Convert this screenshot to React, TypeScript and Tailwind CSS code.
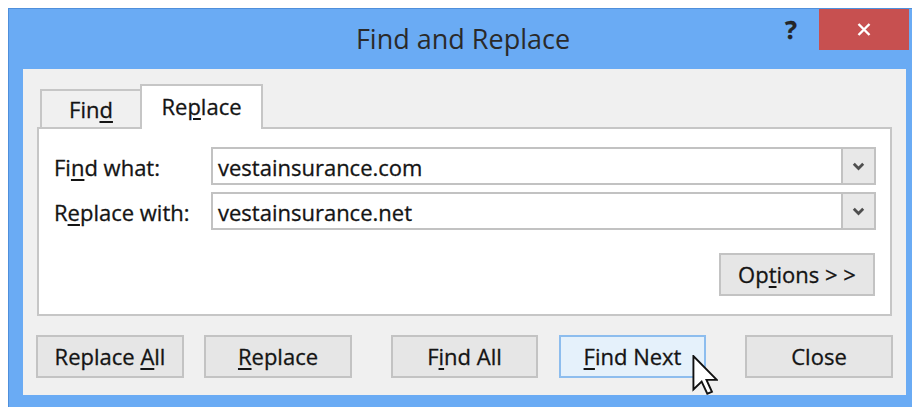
import type { ReactNode } from 'react'

// mnemonic letter, drawn underlined like a Win32 accelerator
function Key({ children }: { children: ReactNode }) {
  return <span className="underline decoration-[1.5px] underline-offset-[3px]">{children}</span>
}

function Chevron() {
  return (
    <svg width="13" height="9" viewBox="0 0 13 9">
      <path d="M1.8 1.8 L6.5 6.5 L11.2 1.8" fill="none" stroke="#4f4f4f" strokeWidth="2.8" />
    </svg>
  )
}

function ComboBox({ value }: { value: string }) {
  return (
    <div className="flex h-[38px] w-[665px] border-2 border-[#c2c2c2] bg-white">
      <div className="flex flex-1 items-center pl-[5px] pt-[2px]">
        <span>{value}</span>
      </div>
      <div className="flex w-[33px] items-center justify-center border-l-2 border-[#c2c2c2] bg-[#e8e8e8]">
        <Chevron />
      </div>
    </div>
  )
}

function DialogButton({
  children,
  width,
  hot = false,
  className = '',
}: {
  children: ReactNode
  width: string
  hot?: boolean
  className?: string
}) {
  return (
    <button
      className={`flex h-[43px] items-center justify-center border-2 ${width} ${
        hot ? 'border-[#8dbdee] bg-[#e5f1fb]' : 'border-[#c3c3c3] bg-[#e6e6e6]'
      } ${className}`}
    >
      <span>{children}</span>
    </button>
  )
}

function Cursor() {
  return (
    <svg className="absolute left-[692px] top-[355px]" width="26" height="40" viewBox="0 0 12 19">
      <polygon
        points="0.5,0.5 0.5,16.4 4.4,12.6 7.1,18.4 9.3,17.5 6.7,11.8 11.6,11.8"
        fill="white"
        stroke="#111"
        strokeWidth="0.9"
        strokeLinejoin="miter"
      />
    </svg>
  )
}

export default function App() {
  return (
    <div className="relative h-[407px] w-[912px] overflow-hidden bg-white pl-[8px] pt-[8px] font-['Open_Sans','Noto_Sans',sans-serif] text-[22px] text-[#141414] [-webkit-text-stroke:0.3px_#141414]">
      <div className="h-[410px] w-[910px] border border-[#4f8fdb] bg-[#6aabf4]">
        {/* caption */}
        <div className="flex h-[60px]">
          <div className="w-[144px]" />
          <div className="flex flex-1 items-center justify-center text-[27px] text-[#2a2a2a] [-webkit-text-stroke:0px]">
            <span>Find and Replace</span>
          </div>
          <div className="flex w-[144px] items-start justify-end pr-[8px]">
            <div className="flex h-[41px] w-[46px] items-center justify-center pr-[10px] text-[25px] font-bold text-[#262626]">
              ?
            </div>
            <div className="flex h-[41px] w-[90px] items-center justify-center bg-[#c75050]">
              <svg width="14" height="13" viewBox="0 0 14 13">
                <path d="M1.5 1 L12.5 12 M12.5 1 L1.5 12" stroke="white" strokeWidth="2.4" />
              </svg>
            </div>
          </div>
        </div>

        {/* client area */}
        <div className="ml-[14px] h-[326px] w-[883px] bg-[#f0f0f0] pl-[14px] pt-[15px]">
          <div className="flex items-end pl-[3px]">
            <div className="flex h-[38px] w-[102px] items-center justify-center border-2 border-b-0 border-[#c6c6c6] bg-[#f0f0f0]">
              <span>
                Fin<Key>d</Key>
              </span>
            </div>
            <div className="relative z-10 -mb-[2px] -ml-[2px] flex h-[45px] w-[123px] items-center justify-center border-2 border-b-0 border-[#c6c6c6] bg-white pb-[2px]">
              <span>
                Re<Key>p</Key>lace
              </span>
            </div>
          </div>

          <div className="h-[189px] w-[855px] border-2 border-[#c6c6c6] bg-white pl-[15px] pt-[18px]">
            <div className="flex items-center">
              <div className="w-[157px] pt-[2px]">
                Fi<Key>n</Key>d what:
              </div>
              <ComboBox value="vestainsurance.com" />
            </div>
            <div className="mt-[7px] flex items-center">
              <div className="w-[157px] pt-[2px]">
                R<Key>e</Key>place with:
              </div>
              <ComboBox value="vestainsurance.net" />
            </div>
            <div className="mt-[23px] flex w-[821px] justify-end">
              <DialogButton width="w-[156px]">
                Op<Key>t</Key>ions &gt; &gt;
              </DialogButton>
            </div>
          </div>

          <div className="-ml-[1px] mt-[19px] flex">
            <DialogButton width="w-[148px]">
              Replace <Key>A</Key>ll
            </DialogButton>
            <DialogButton width="w-[148px]" className="ml-[20px]">
              <Key>R</Key>eplace
            </DialogButton>
            <DialogButton width="w-[147px]" className="ml-[39px]">
              F<Key>i</Key>nd All
            </DialogButton>
            <DialogButton width="w-[147px]" hot className="ml-[21px]">
              <Key>F</Key>ind Next
            </DialogButton>
            <DialogButton width="w-[148px]" className="ml-[39px]">
              Close
            </DialogButton>
          </div>
        </div>
      </div>
      <Cursor />
    </div>
  )
}
